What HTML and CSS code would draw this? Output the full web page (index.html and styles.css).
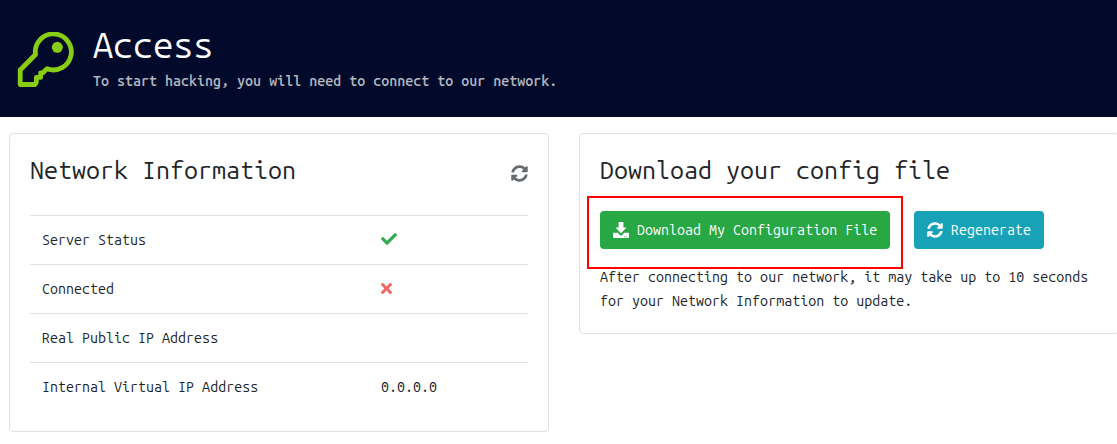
FILE: index.html
```html
<!DOCTYPE html>
<html lang="en">
<head>
<meta charset="utf-8">
<title>Access</title>
<link rel="stylesheet" href="styles.css">
</head>
<body>
<svg class="symbols" aria-hidden="true">
  <symbol id="sync" viewBox="0 0 512 512"><path d="M370.72 133.28C339.458 104.008 298.888 87.962 255.848 88c-77.458.068-144.328 53.178-162.791 126.85-1.344 5.363-6.122 9.15-11.651 9.15H24.103c-7.498 0-13.194-6.807-11.807-14.176C33.933 94.924 134.813 8 256 8c66.448 0 126.791 26.136 171.315 68.685L463.03 40.97C478.149 25.851 504 36.559 504 57.941V192c0 13.255-10.745 24-24 24H345.941c-21.382 0-32.09-25.851-16.971-40.971l41.75-41.749zM32 296h134.059c21.382 0 32.09 25.851 16.971 40.971l-41.75 41.75c31.262 29.273 71.835 45.319 114.876 45.28 77.418-.07 144.315-53.144 162.787-126.849 1.344-5.363 6.122-9.15 11.651-9.15h57.304c7.498 0 13.194 6.807 11.807 14.176C478.067 417.076 377.187 504 256 504c-66.448 0-126.791-26.136-171.315-68.685L48.97 471.03C33.851 486.149 8 475.441 8 454.059V320c0-13.255 10.745-24 24-24z"/></symbol>
</svg>
<header class="banner">
  <svg class="key" viewBox="0 0 58 56">
    <path d="M3.2 52.5V38L18.5 22.5A18 18 0 1 1 30 36.8L25.6 41H23.6V45.4H19.4V50L18 52.5Z"/>
    <circle cx="40.3" cy="15.3" r="5.5"/>
  </svg>
  <div>
    <h1 class="banner-title">Access</h1>
    <p class="banner-text">To start hacking, you will need to connect to our network.</p>
  </div>
</header>
<main class="columns">
  <section class="card network">
    <div class="card-head">
      <h2 class="card-title">Network Information</h2>
      <svg class="refresh"><use href="#sync"/></svg>
    </div>
    <dl class="table">
      <div class="row"><dt>Server Status</dt><dd><svg class="check" viewBox="0 64 512 384"><path d="M173.898 439.404l-166.4-166.4c-9.997-9.997-9.997-26.206 0-36.204l36.203-36.204c9.997-9.998 26.207-9.998 36.204 0L192 312.69 432.095 72.596c9.997-9.997 26.207-9.997 36.204 0l36.203 36.204c9.997 9.997 9.997 26.206 0 36.204l-294.4 294.401c-9.998 9.997-26.207 9.997-36.204-.001z"/></svg></dd></div>
      <div class="row"><dt>Connected</dt><dd><svg class="cross" viewBox="0 80 352 352"><path d="M242.72 256l100.07-100.07c12.28-12.28 12.28-32.19 0-44.48l-22.24-22.24c-12.28-12.28-32.19-12.28-44.48 0L176 189.28 75.93 89.21c-12.28-12.28-32.19-12.28-44.48 0L9.21 111.45c-12.28 12.28-12.28 32.19 0 44.48L109.28 256 9.21 356.07c-12.28 12.28-12.28 32.19 0 44.48l22.24 22.24c12.28 12.28 32.2 12.28 44.48 0L176 322.72l100.07 100.07c12.28 12.28 32.2 12.28 44.48 0l22.24-22.24c12.28-12.28 12.28-32.19 0-44.48L242.72 256z"/></svg></dd></div>
      <div class="row"><dt>Real Public IP Address</dt><dd></dd></div>
      <div class="row"><dt>Internal Virtual IP Address</dt><dd>0.0.0.0</dd></div>
    </dl>
  </section>
  <section class="card download">
    <h2 class="card-title">Download your config file</h2>
    <div class="actions">
      <div class="highlight">
        <button class="btn btn-green"><svg viewBox="0 0 16 16"><path d="M5.6 0h4.8v5.6h3.1L8 11.2 2.5 5.6h3.1zM.5 10.8h4.2L8 14l3.3-3.2h4.2l.5.5v4.2l-.5.5H.5l-.5-.5v-4.2zM11.2 14v.8h.8V14zM13.3 14v.8h.8V14z" fill-rule="evenodd"/></svg>Download My Configuration File</button>
      </div>
      <button class="btn btn-teal"><svg><use href="#sync"/></svg>Regenerate</button>
    </div>
    <p class="note">After connecting to our network, it may take up to 10 seconds<br>for your Network Information to update.</p>
  </section>
</main>
</body>
</html>
```
FILE: styles.css
```css
* { box-sizing: border-box; }
body {
  margin: 0;
  overflow: hidden;
  background: #fff;
  color: #212529;
  font: 14.3px/24px "Ubuntu Mono", "DejaVu Sans Mono", monospace;
}
h1, h2, p, dl, dd { margin: 0; font-weight: 400; }
.symbols { display: none; }
svg { display: block; fill: currentColor; }

.banner {
  display: flex;
  gap: 18px;
  height: 117px;
  padding: 21px 18px 0 17px;
  background: #010a2b;
}
.key { width: 58px; height: 56px; margin-top: 11px; color: #88cc14; }
.key path { fill: none; stroke: currentColor; stroke-width: 4.8; stroke-linejoin: round; }
.banner-title { color: #fff; font-size: 35.8px; font-weight: 450; line-height: 48px; }
.banner-text { color: #b3b6bf; font-weight: 500; line-height: 24px; }

.columns {
  display: flex;
  align-items: flex-start;
  gap: 30px;
  padding: 16px 0 0 9px;
}
.card { flex: none; width: 540px; padding: 20px; border: 1px solid #dfdfdf; border-radius: 4px; }
.network { height: 299px; }
.download { height: 201px; }
.card-head { display: flex; justify-content: space-between; height: 61px; }
.card-title { font-size: 25px; line-height: 32px; }
.refresh { width: 17px; height: 17px; margin-top: 11px; color: #666a6d; }

.row {
  display: grid;
  grid-template-columns: 339px 1fr;
  height: 49px;
  padding: 12px;
  border-top: 1px solid #dee2e6;
}
.check { width: 16px; height: 12px; margin-top: 5px; color: #32a852; }
.cross { width: 11px; height: 11px; margin-top: 6px; color: #f26660; }

.actions { display: flex; gap: 11px; margin: 10px 0 0 -13px; }
.highlight { width: 316px; height: 73px; padding: 13px 11px; border: 2px solid #f00; }
.btn {
  display: flex;
  align-items: center;
  gap: 8px;
  height: 38px;
  padding: 0 13px;
  border: 0;
  border-radius: 4px;
  color: #fff;
  font: inherit;
  font-weight: 450;
  white-space: nowrap;
}
.btn svg { flex: none; width: 16px; height: 16px; }
.btn-green { background: #28a745; }
.btn-teal { margin-top: 15px; background: #17a2b8; }
.note { margin-top: -4px; white-space: nowrap; }
```
